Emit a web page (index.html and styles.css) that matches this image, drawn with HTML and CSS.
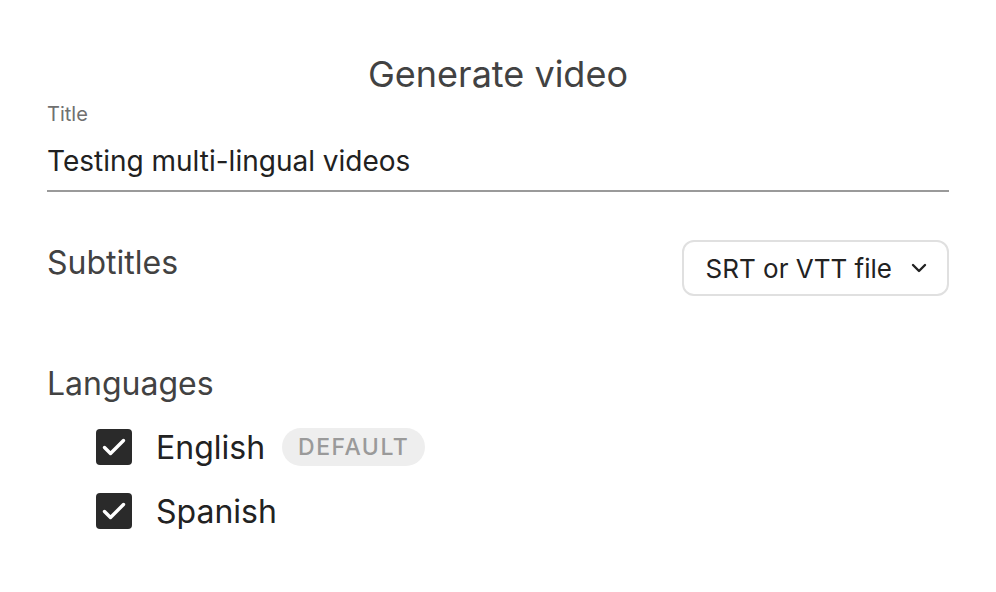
FILE: index.html
```html
<!DOCTYPE html>
<html lang="en">
<head>
<meta charset="utf-8">
<title>Generate video</title>
<link rel="stylesheet" href="styles.css">
</head>
<body>
<div class="dialog">
  <h1 class="heading">Generate video</h1>
  <div class="field">
    <label class="field-label" for="title">Title</label>
    <input class="field-input" id="title" type="text" value="Testing multi-lingual videos">
  </div>
  <div class="row">
    <h2 class="section">Subtitles</h2>
    <button class="select" type="button">
      <span>SRT or VTT file</span>
      <svg class="chev" width="16" height="10" viewBox="0 0 16 10"><path d="M2 2 L8 8 L14 2" fill="none" stroke="#222" stroke-width="2.4" stroke-linecap="round" stroke-linejoin="round"/></svg>
    </button>
  </div>
  <h2 class="section section-lang">Languages</h2>
  <ul class="langs">
    <li class="lang">
      <span class="check"><svg width="36" height="36" viewBox="0 0 36 36"><path d="M8.5 18.5 L14.5 24.5 L27.5 11.5" fill="none" stroke="#fff" stroke-width="3.4" stroke-linecap="round" stroke-linejoin="round"/></svg></span>
      <span class="lang-name">English</span>
      <span class="chip">DEFAULT</span>
    </li>
    <li class="lang">
      <span class="check"><svg width="36" height="36" viewBox="0 0 36 36"><path d="M8.5 18.5 L14.5 24.5 L27.5 11.5" fill="none" stroke="#fff" stroke-width="3.4" stroke-linecap="round" stroke-linejoin="round"/></svg></span>
      <span class="lang-name">Spanish</span>
    </li>
  </ul>
</div>
</body>
</html>
```
FILE: styles.css
```css
html, body {
  margin: 0;
  background: #fff;
  font-family: Inter, "Noto Sans", sans-serif;
}
.dialog {
  padding: 52px 47px 0;
}
.heading {
  margin: 0;
  text-align: center;
  font-size: 36px;
  font-weight: 400;
  line-height: 44px;
  color: #424242;
}
.field {
  display: flex;
  flex-direction: column;
  margin-top: 6px;
}
.field-label {
  font-size: 20px;
  line-height: 24px;
  color: #707070;
}
.field-input {
  margin-top: 18px;
  border: none;
  border-bottom: 2px solid #9a9a9a;
  outline: none;
  padding: 0 0 12px;
  font-family: inherit;
  font-size: 28px;
  line-height: 34px;
  color: #212121;
  background: transparent;
}
.row {
  display: flex;
  justify-content: space-between;
  align-items: flex-start;
  margin-top: 49px;
}
.section {
  margin: 0;
  font-size: 32px;
  font-weight: 400;
  line-height: 44px;
  color: #424242;
}
.select {
  display: flex;
  align-items: center;
  gap: 19px;
  height: 56px;
  padding: 0 20px 0 22px;
  margin-top: -1px;
  border: 2px solid #e0e0e0;
  border-radius: 12px;
  background: #fff;
  font-family: inherit;
  font-size: 26px;
  color: #222;
}
.section-lang {
  margin-top: 66px;
}
.langs {
  list-style: none;
  margin: 23px 0 0;
  padding: 0 0 0 49px;
  display: flex;
  flex-direction: column;
  gap: 28px;
}
.lang {
  display: flex;
  align-items: center;
  height: 36px;
}
.check {
  width: 36px;
  height: 36px;
  border-radius: 4px;
  background: #2a2a2a;
  display: flex;
}
.lang-name {
  margin-left: 24px;
  font-size: 32px;
  color: #222;
}
.chip {
  margin-left: 17px;
  height: 38px;
  padding: 0 16px;
  border-radius: 19px;
  background: #eeeeee;
  color: #9a9a9a;
  font-size: 23px;
  font-weight: 500;
  letter-spacing: 1.5px;
  display: flex;
  align-items: center;
}
```
